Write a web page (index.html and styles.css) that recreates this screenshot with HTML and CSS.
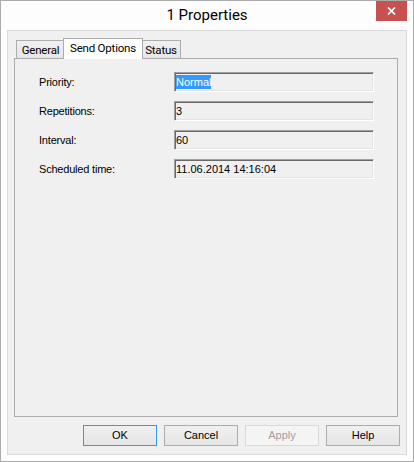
FILE: index.html
```html
<!DOCTYPE html>
<html lang="en">
<head>
  <meta charset="UTF-8" />
  <title>1 Properties</title>
  <link rel="stylesheet" href="styles.css">
</head>
<body>

  <div class="window">
    <div class="titlebar">
      <div class="title">1 Properties</div>
      <button class="close" type="button" aria-label="Close">
        <svg width="9" height="8" viewBox="0 0 9 8">
          <path d="M1 0.5 L8 7.5 M8 0.5 L1 7.5" stroke="#fff" stroke-width="1.7" fill="none"/>
        </svg>
      </button>
    </div>

    <div class="client">
      <div class="tabs">
        <div class="tab tab-general">General</div>
        <div class="tab tab-send selected">Send Options</div>
        <div class="tab tab-status">Status</div>
      </div>

      <div class="panel">
        <div class="form">
          <label>Priority:</label>
          <div class="field"><span class="sel">Normal</span></div>

          <label>Repetitions:</label>
          <div class="field">3</div>

          <label>Interval:</label>
          <div class="field">60</div>

          <label>Scheduled time:</label>
          <div class="field">11.06.2014 14:16:04</div>
        </div>
      </div>

      <div class="buttons">
        <button type="button" class="btn default">OK</button>
        <button type="button" class="btn">Cancel</button>
        <button type="button" class="btn" disabled>Apply</button>
        <button type="button" class="btn">Help</button>
      </div>
    </div>
  </div>

</body>
</html>
```

FILE: styles.css
```css
body { margin: 0; font-family: "Liberation Sans", Arial, sans-serif; font-size: 11px; color: #000; background: #fff; }

.window { width: 414px; height: 462px; box-sizing: border-box; border: 1px solid #acacac; background: #fdfdfd; display: flex; flex-direction: column; padding: 0 6px 6px; }

.titlebar { height: 29px; display: flex; align-items: flex-start; }
.title { flex: 1; padding-left: 31px; text-align: center; font-family: Roboto, "Liberation Sans", sans-serif; font-size: 15px; line-height: 29px; color: #000; }
.close { width: 31px; height: 20px; border: none; padding: 0; background: #c75050; display: flex; align-items: center; justify-content: center; }

.client { flex: 1; border: 1px solid #dadada; background: #f0f0f0; display: flex; flex-direction: column; }

.tabs { display: flex; align-items: flex-end; height: 20px; margin-top: 7px; padding-left: 8px; }
.tab { box-sizing: border-box; height: 18px; padding-top: 1px; line-height: 16px; text-align: center; border: 1px solid #acacac; border-bottom: none; background: linear-gradient(#f0f0f0, #e5e5e5); font-family: Roboto, "Liberation Sans", sans-serif; font-size: 11.5px; letter-spacing: -0.2px; }
.tab-general { width: 49px; }
.tab-send { width: 80px; }
.tab-status { width: 40px; }
.tab.selected { height: 21px; margin: 0 -2px -1px; background: #fff; position: relative; z-index: 1; }

.panel { flex: 1; margin: 0 8px 0 6px; border: 1px solid #acacac; background: #f0f0f0; }

.form { display: grid; grid-template-columns: 135px 200px; grid-auto-rows: 20px; row-gap: 9px; align-items: center; padding: 13px 0 0 24px; }
.form label { line-height: 13px; letter-spacing: -0.2px; }

.field { box-sizing: border-box; height: 20px; padding: 2px 1px 0; line-height: 14px; border: 1px solid; border-color: #a0a0a0 #fff #fff #a0a0a0; box-shadow: inset 1px 1px 0 #696969, inset -1px -1px 0 #e3e3e3; white-space: nowrap; }
.sel { display: inline-block; background: #3399ff; color: #fff; }

.buttons { display: flex; justify-content: flex-end; gap: 7px; padding: 8px 6px 8px 0; }
.btn { width: 74px; height: 21px; padding: 0; border: 1px solid #acacac; background: linear-gradient(#f0f0f0, #e5e5e5); font-family: "Liberation Sans", Arial, sans-serif; font-size: 11px; line-height: 19px; color: #000; }
.btn.default { border-color: #3399ff; }
.btn:disabled { border-color: #d9d9d9; background: #f4f4f4; color: #a0a0a0; }
```
